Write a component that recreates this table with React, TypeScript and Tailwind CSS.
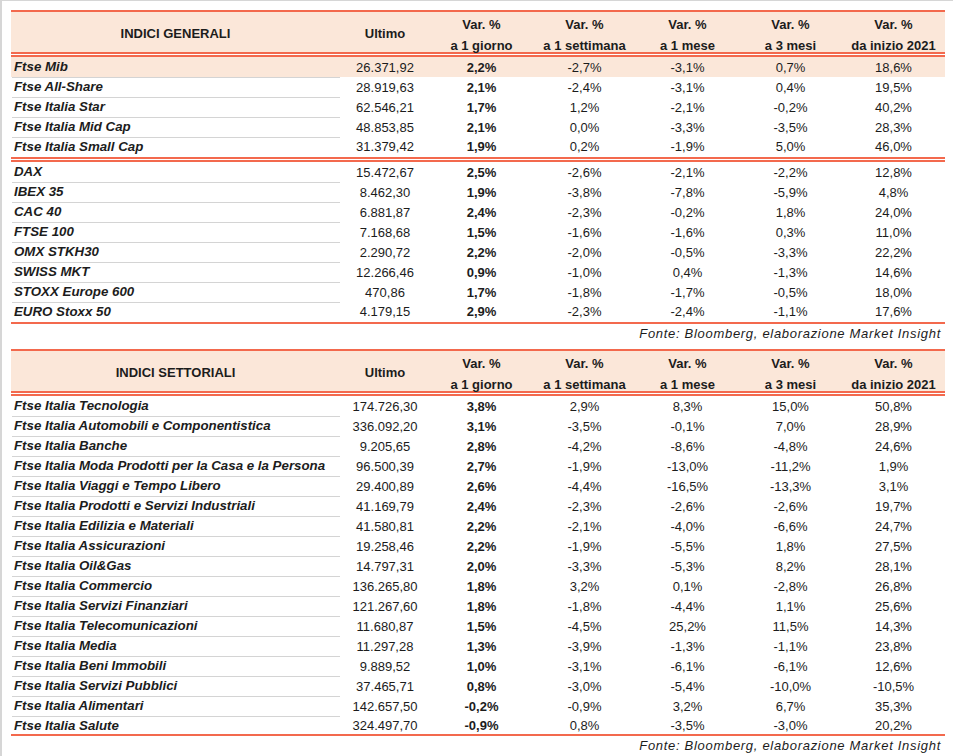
import React from "react";

type Row = [string, string, string, string, string, string, string];

const sec1a: Row[] = [
  ["Ftse Mib", "26.371,92", "2,2%", "-2,7%", "-3,1%", "0,7%", "18,6%"],
  ["Ftse All-Share", "28.919,63", "2,1%", "-2,4%", "-3,1%", "0,4%", "19,5%"],
  ["Ftse Italia Star", "62.546,21", "1,7%", "1,2%", "-2,1%", "-0,2%", "40,2%"],
  ["Ftse Italia Mid Cap", "48.853,85", "2,1%", "0,0%", "-3,3%", "-3,5%", "28,3%"],
  ["Ftse Italia Small Cap", "31.379,42", "1,9%", "0,2%", "-1,9%", "5,0%", "46,0%"],
];

const sec1b: Row[] = [
  ["DAX", "15.472,67", "2,5%", "-2,6%", "-2,1%", "-2,2%", "12,8%"],
  ["IBEX 35", "8.462,30", "1,9%", "-3,8%", "-7,8%", "-5,9%", "4,8%"],
  ["CAC 40", "6.881,87", "2,4%", "-2,3%", "-0,2%", "1,8%", "24,0%"],
  ["FTSE 100", "7.168,68", "1,5%", "-1,6%", "-1,6%", "0,3%", "11,0%"],
  ["OMX STKH30", "2.290,72", "2,2%", "-2,0%", "-0,5%", "-3,3%", "22,2%"],
  ["SWISS MKT", "12.266,46", "0,9%", "-1,0%", "0,4%", "-1,3%", "14,6%"],
  ["STOXX Europe 600", "470,86", "1,7%", "-1,8%", "-1,7%", "-0,5%", "18,0%"],
  ["EURO Stoxx 50", "4.179,15", "2,9%", "-2,3%", "-2,4%", "-1,1%", "17,6%"],
];

const sec2: Row[] = [
  ["Ftse Italia Tecnologia", "174.726,30", "3,8%", "2,9%", "8,3%", "15,0%", "50,8%"],
  ["Ftse Italia Automobili e Componentistica", "336.092,20", "3,1%", "-3,5%", "-0,1%", "7,0%", "28,9%"],
  ["Ftse Italia Banche", "9.205,65", "2,8%", "-4,2%", "-8,6%", "-4,8%", "24,6%"],
  ["Ftse Italia Moda Prodotti per la Casa e la Persona", "96.500,39", "2,7%", "-1,9%", "-13,0%", "-11,2%", "1,9%"],
  ["Ftse Italia Viaggi e Tempo Libero", "29.400,89", "2,6%", "-4,4%", "-16,5%", "-13,3%", "3,1%"],
  ["Ftse Italia Prodotti e Servizi Industriali", "41.169,79", "2,4%", "-2,3%", "-2,6%", "-2,6%", "19,7%"],
  ["Ftse Italia Edilizia e Materiali", "41.580,81", "2,2%", "-2,1%", "-4,0%", "-6,6%", "24,7%"],
  ["Ftse Italia Assicurazioni", "19.258,46", "2,2%", "-1,9%", "-5,5%", "1,8%", "27,5%"],
  ["Ftse Italia Oil&Gas", "14.797,31", "2,0%", "-3,3%", "-5,3%", "8,2%", "28,1%"],
  ["Ftse Italia Commercio", "136.265,80", "1,8%", "3,2%", "0,1%", "-2,8%", "26,8%"],
  ["Ftse Italia Servizi Finanziari", "121.267,60", "1,8%", "-1,8%", "-4,4%", "1,1%", "25,6%"],
  ["Ftse Italia Telecomunicazioni", "11.680,87", "1,5%", "-4,5%", "25,2%", "11,5%", "14,3%"],
  ["Ftse Italia Media", "11.297,28", "1,3%", "-3,9%", "-1,3%", "-1,1%", "23,8%"],
  ["Ftse Italia Beni Immobili", "9.889,52", "1,0%", "-3,1%", "-6,1%", "-6,1%", "12,6%"],
  ["Ftse Italia Servizi Pubblici", "37.465,71", "0,8%", "-3,0%", "-5,4%", "-10,0%", "-10,5%"],
  ["Ftse Italia Alimentari", "142.657,50", "-0,2%", "-0,9%", "3,2%", "6,7%", "35,3%"],
  ["Ftse Italia Salute", "324.497,70", "-0,9%", "0,8%", "-3,5%", "-3,0%", "20,2%"],
];

const grid = "grid grid-cols-[329px_90px_103px_103px_103px_103px_103px]";

function Header({ title }: { title: string }) {
  const vars = ["a 1 giorno", "a 1 settimana", "a 1 mese", "a 3 mesi", "da inizio 2021"];
  return (
    <div className={`${grid} h-[40px] bg-[#fbe7d9] font-bold`}>
      <div className="flex items-center justify-center">{title}</div>
      <div className="flex items-center justify-center">Ultimo</div>
      {vars.map((v) => (
        <div key={v} className="flex flex-col items-center justify-center pt-[2px] leading-[21px]">
          <span>Var. %</span>
          <span>{v}</span>
        </div>
      ))}
    </div>
  );
}

function Rows({ rows, highlightFirst, shortLast }: { rows: Row[]; highlightFirst?: boolean; shortLast?: boolean }) {
  return (
    <div>
      {rows.map((r, i) => {
        const last = i === rows.length - 1;
        const hl = highlightFirst && i === 0;
        return (
          <div
            key={r[0]}
            className={`${grid} ${last && shortLast ? "h-[18px]" : "h-[20px]"} ${hl ? "bg-[#fbe7d9]" : ""}`}
          >
            <div className="flex items-center pl-[1px]">
              <div
                className={`flex h-full w-[328px] items-center pl-[2px] text-[13.3px] font-bold italic ${
                  last ? "" : "border-b border-[#d4d4d4]"
                }`}
              >
                {r[0]}
              </div>
            </div>
            <div className="flex items-center justify-center">{r[1]}</div>
            <div className="flex items-center justify-center font-bold">{r[2]}</div>
            <div className="flex items-center justify-center">{r[3]}</div>
            <div className="flex items-center justify-center">{r[4]}</div>
            <div className="flex items-center justify-center">{r[5]}</div>
            <div className="flex items-center justify-center">{r[6]}</div>
          </div>
        );
      })}
    </div>
  );
}

const Double = () => <div className="h-[5px] border-y-2 border-[#f3694d]" />;
const Single = () => <div className="h-[2px] bg-[#f3694d]" />;

function Fonte({ h }: { h: string }) {
  return (
    <div className={`flex ${h} items-start justify-end pr-[4px] pt-[1px] italic tracking-[0.7px] leading-[17px]`}>
      Fonte: Bloomberg, elaborazione Market Insight
    </div>
  );
}

export default function App() {
  return (
    <div className="h-[756px] w-[953px] overflow-hidden border-l-2 border-t border-[#d6d6d6] bg-white pl-[9px] pt-[9px] font-['Liberation_Sans',Arial,sans-serif] text-[13px] text-[#1c1c1c]">
      <div className="w-[934px]">
        <Single />
        <Header title="INDICI GENERALI" />
        <Double />
        <Rows rows={sec1a} highlightFirst />
        <Double />
        <Rows rows={sec1b} />
        <Single />
        <Fonte h="h-[25px]" />
        <Single />
        <Header title="INDICI SETTORIALI" />
        <Double />
        <Rows rows={sec2} shortLast />
        <Single />
        <Fonte h="h-[20px]" />
      </div>
    </div>
  );
}
